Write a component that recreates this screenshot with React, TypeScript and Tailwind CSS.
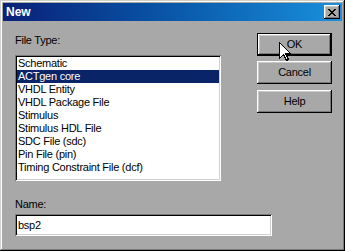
import React from 'react';

const raised =
  'shadow-[inset_-1px_-1px_#000,inset_1px_1px_#fff,inset_-2px_-2px_#7a7a7a,inset_2px_2px_#c8c8c8]';
const sunken =
  'shadow-[inset_1px_1px_#7a7a7a,inset_-1px_-1px_#fff,inset_2px_2px_#000,inset_-2px_-2px_#d0d0d0]';

const fileTypes = [
  'Schematic',
  'ACTgen core',
  'VHDL Entity',
  'VHDL Package File',
  'Stimulus',
  'Stimulus HDL File',
  'SDC File (sdc)',
  'Pin File (pin)',
  'Timing Constraint File (dcf)',
];

function CloseGlyph() {
  const rows = ['11000011', '01100110', '00111100', '00011000', '00111100', '01100110', '11000011'];
  return (
    <svg width="8" height="7" viewBox="0 0 8 7" shapeRendering="crispEdges">
      {rows.map((r, y) =>
        r.split('').map((c, x) => (c === '1' ? <rect key={`${x}-${y}`} x={x} y={y} width="1" height="1" fill="#000" /> : null))
      )}
    </svg>
  );
}

function Cursor() {
  return (
    <svg className="absolute left-[279px] top-[42px]" width="13" height="20" viewBox="0 0 13 20" shapeRendering="crispEdges">
      <path d="M0.5 0.5 L0.5 16.5 L4.5 12.5 L7.5 18.5 L9.5 17.5 L6.5 11.5 L11.5 11.5 Z" fill="#fff" stroke="#000" strokeWidth="1" />
    </svg>
  );
}

function DlgButton({ label, isDefault }: { label: string; isDefault?: boolean }) {
  if (isDefault) {
    return (
      <div className="w-[75px] h-[23px] border border-black">
        <div className={`w-full h-full flex items-center justify-center bg-[#a8a8a8] ${raised}`}>{label}</div>
      </div>
    );
  }
  return (
    <div className={`w-[75px] h-[23px] flex items-center justify-center bg-[#a8a8a8] ${raised}`}>{label}</div>
  );
}

export default function App() {
  return (
    <div
      className="relative w-[345px] h-[251px] bg-[#a8a8a8] p-[3px] text-[11px] text-black tracking-[-0.25px] font-['Liberation_Sans',Arial,sans-serif] shadow-[inset_-1px_-1px_#000,inset_1px_1px_#d0d0d0,inset_-2px_-2px_#7a7a7a,inset_2px_2px_#fff] select-none"
    >
      {/* Title bar */}
      <div className="h-[18px] flex items-center justify-between pl-[3px] pr-[2px] bg-gradient-to-r from-[#0a1f78] to-[#1a90dc]">
        <span className="text-white font-bold text-[12px] tracking-normal">New</span>
        <div className={`w-[16px] h-[14px] flex items-center justify-center bg-[#a8a8a8] ${raised}`}>
          <CloseGlyph />
        </div>
      </div>

      {/* Top row: list + buttons */}
      <div className="flex pl-[12px] pt-[12px]">
        <div className="w-[206px]">
          <div className="mt-[1px] h-[13px] leading-[13px]">File Type:</div>
          <div className={`mt-[8px] h-[126px] bg-white p-[2px] ${sunken}`}>
            {fileTypes.map((t) => (
              <div
                key={t}
                className={`h-[13px] leading-[13px] pl-[1px] ${t === 'ACTgen core' ? 'bg-[#0a2468] text-white' : ''}`}
              >
                {t}
              </div>
            ))}
          </div>
        </div>
        <div className="ml-[36px] flex flex-col gap-[5px]">
          <DlgButton label="OK" isDefault />
          <DlgButton label="Cancel" />
          <div className="mt-[1px]">
            <DlgButton label="Help" />
          </div>
        </div>
      </div>

      {/* Name */}
      <div className="pl-[12px] mt-[17px]">
        <div className="h-[13px] leading-[13px]">Name:</div>
        <div className={`mt-[3px] w-[257px] h-[22px] bg-white flex items-center px-[3px] ${sunken}`}>bsp2</div>
      </div>

      <Cursor />
    </div>
  );
}
